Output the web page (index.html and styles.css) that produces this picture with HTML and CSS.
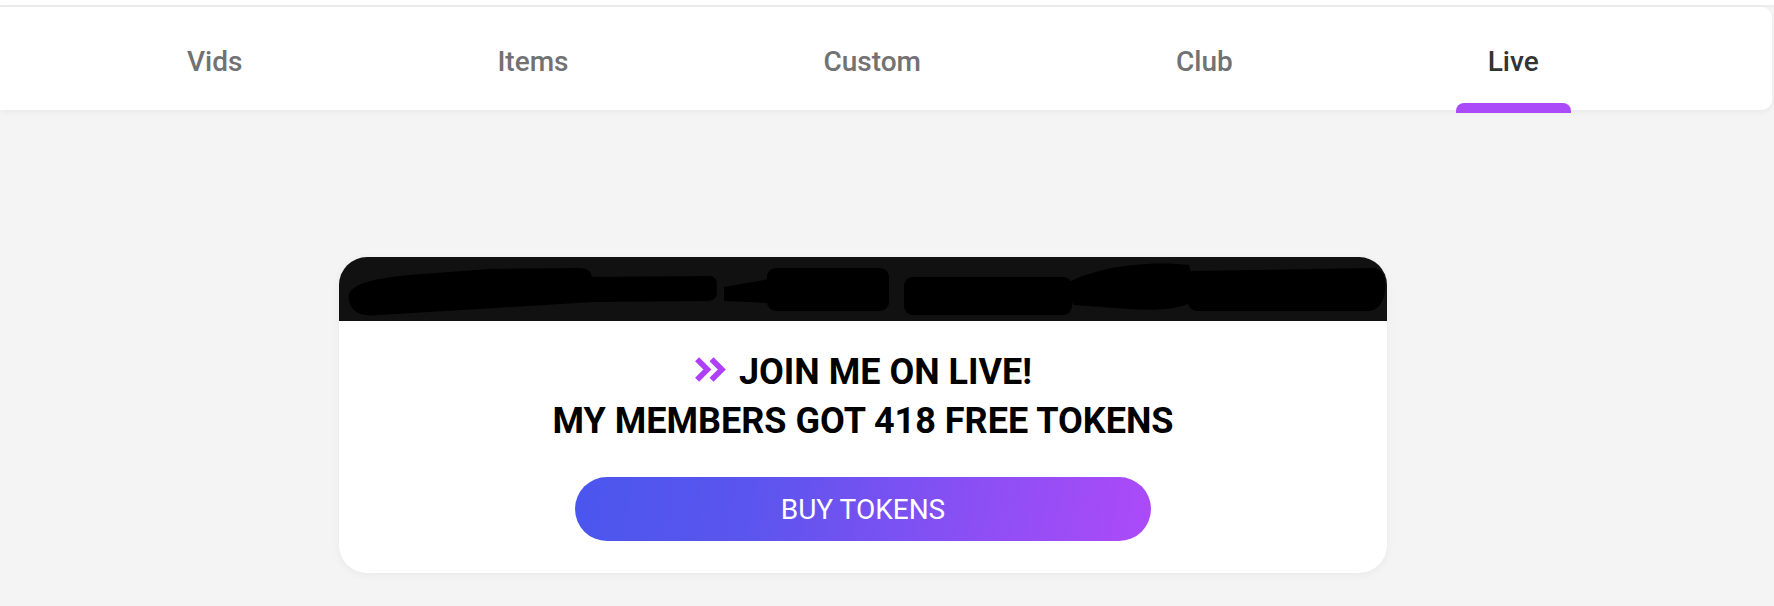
FILE: index.html
```html
<!DOCTYPE html>
<html lang="en">
<head>
<meta charset="utf-8">
<title>Live</title>
<link rel="stylesheet" href="styles.css">
</head>
<body>
<div class="topbar"></div>
<nav class="tabs">
  <a class="tab">Vids</a>
  <a class="tab">Items</a>
  <a class="tab">Custom</a>
  <a class="tab">Club</a>
  <a class="tab active">Live</a>
</nav>
<main class="main">
  <section class="card">
    <div class="card-head">
      <svg class="redact" viewBox="0 0 1048 64" preserveAspectRatio="none" aria-hidden="true">
        <path d="M10,44 C6,28 30,22 70,18 L150,12 L240,11 Q252,11 253,20 L370,19 Q378,19 378,28 L378,36 Q378,44 366,44 L255,45 L140,52 L40,58 Q14,61 10,44 Z" fill="#000"/>
        <rect x="428" y="11" width="122" height="43" rx="9" fill="#000"/>
        <path d="M385,30 L430,22 L430,46 L385,44 Z" fill="#000"/>
        <rect x="565" y="20" width="168" height="38" rx="9" fill="#000"/>
        <path d="M720,30 C760,6 820,4 850,8 L858,40 C850,52 820,54 790,52 L735,48 Z" fill="#000"/>
        <path d="M850,14 L1035,11 Q1048,12 1046,34 Q1044,52 1030,54 L860,54 Q848,54 848,40 Z" fill="#000"/>
      </svg>
    </div>
    <div class="card-body">
      <h2 class="title">
        <span class="title-line">
          <svg class="chev" viewBox="0 0 32 26" aria-hidden="true">
            <polyline points="3,3 13,13 3,23" fill="none" stroke="#b03ff8" stroke-width="5.5"/>
            <polyline points="17,3 27,13 17,23" fill="none" stroke="#b03ff8" stroke-width="5.5"/>
          </svg>
          JOIN ME ON LIVE!
        </span>
        <span class="title-line">MY MEMBERS GOT 418 FREE TOKENS</span>
      </h2>
      <button class="buy">BUY TOKENS</button>
    </div>
  </section>
</main>
</body>
</html>
```
FILE: styles.css
```css
* { box-sizing: border-box; }
html, body { margin: 0; padding: 0; }
body {
  background: #f4f4f4;
  font-family: Roboto, "Liberation Sans", Arial, sans-serif;
  width: 1774px;
  height: 606px;
  overflow: hidden;
}
.topbar {
  height: 7px;
  background: #fff;
  border-bottom: 2px solid #ececec;
}
.tabs {
  display: flex;
  align-items: stretch;
  height: 103px;
  margin-right: 2px;
  padding-left: 155px;
  gap: 191px;
  background: #fff;
  border-radius: 0 10px 10px 0;
  box-shadow: 0 2px 6px rgba(0, 0, 0, 0.05);
  position: relative;
  z-index: 1;
}
.tab {
  position: relative;
  display: flex;
  align-items: center;
  padding: 5px 32px 0;
  font-size: 28px;
  font-weight: 500;
  color: #727272;
  text-decoration: none;
}
.tab.active { color: #333; }
.tab.active::after {
  content: "";
  position: absolute;
  left: 0;
  right: 0;
  bottom: -3px;
  height: 10px;
  background: #aa4af8;
  border-radius: 8px 8px 0 0;
}
.main {
  padding: 147px 0 0 339px;
}
.card {
  width: 1048px;
  background: #fff;
  border-radius: 28px;
  overflow: hidden;
  box-shadow: 0 2px 10px rgba(0, 0, 0, 0.05);
}
.card-head {
  height: 64px;
  background: #111;
}
.redact {
  display: block;
  width: 100%;
  height: 64px;
}
.card-body {
  display: flex;
  flex-direction: column;
  align-items: center;
  padding: 27px 0 32px;
}
.title {
  margin: 0;
  display: flex;
  flex-direction: column;
  align-items: center;
  font-size: 36px;
  font-weight: 700;
  line-height: 49px;
  color: #000;
}
.title-line {
  display: flex;
  align-items: center;
  gap: 12px;
}
.chev {
  width: 33px;
  height: 27px;
  margin-top: -6px;
}
.buy {
  margin-top: 31px;
  width: 576px;
  height: 64px;
  border: 0;
  border-radius: 32px;
  background: linear-gradient(100deg, #4a56ee 0%, #5a55ee 30%, #8c4ff4 70%, #ac4af8 100%);
  color: #fff;
  font-family: Roboto, "Liberation Sans", Arial, sans-serif;
  font-size: 28px;
  font-weight: 400;
  padding: 0;
}
```
